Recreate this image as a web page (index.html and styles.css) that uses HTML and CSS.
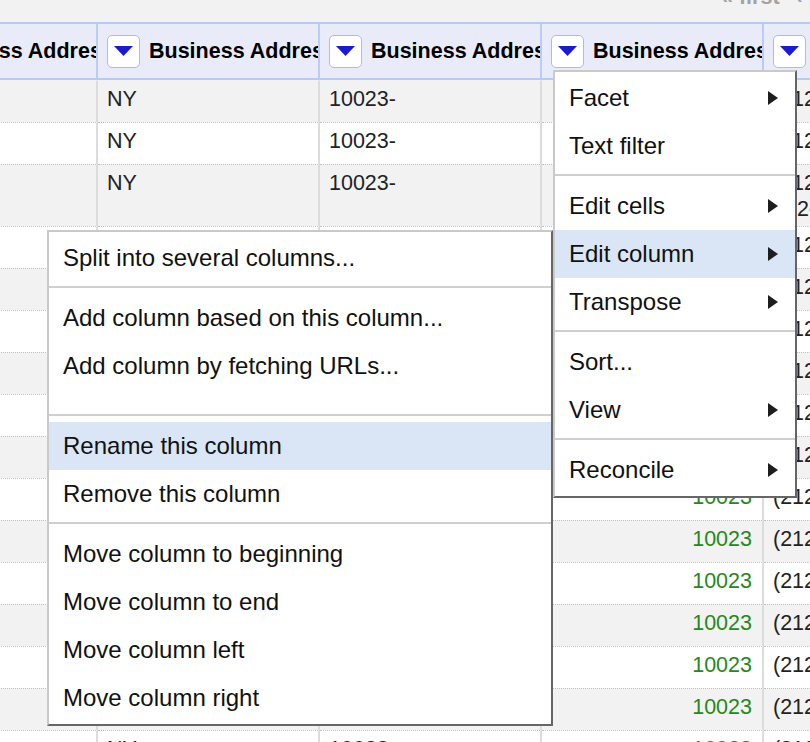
FILE: index.html
```html
<!DOCTYPE html>
<html>
<head>
<meta charset="utf-8">
<title>Data table</title>
<link rel="stylesheet" href="styles.css">
</head>
<body>
<div class="topbar"><span class="pager">« first<span class="prev">‹ previous</span></span></div>
<div class="table">
  <div class="head">
    <div class="hcell"><span class="dd"><svg width="19" height="10" viewBox="0 0 19 10"><path d="M0 0H19L9.5 10Z" fill="#1b1bc9"/></svg></span><span>Business Address : Street</span></div>
    <div class="hcell"><span class="dd"><svg width="19" height="10" viewBox="0 0 19 10"><path d="M0 0H19L9.5 10Z" fill="#1b1bc9"/></svg></span><span>Business Address : State</span></div>
    <div class="hcell"><span class="dd"><svg width="19" height="10" viewBox="0 0 19 10"><path d="M0 0H19L9.5 10Z" fill="#1b1bc9"/></svg></span><span>Business Address : Zip</span></div>
    <div class="hcell"><span class="dd"><svg width="19" height="10" viewBox="0 0 19 10"><path d="M0 0H19L9.5 10Z" fill="#1b1bc9"/></svg></span><span>Business Address : Zip 5</span></div>
    <div class="hcell"><span class="dd"><svg width="19" height="10" viewBox="0 0 19 10"><path d="M0 0H19L9.5 10Z" fill="#1b1bc9"/></svg></span><span>Business Phone</span></div>
  </div>
  <div class="row odd first"><div class="cell"></div><div class="cell">NY</div><div class="cell">10023-</div><div class="cell num">10023</div><div class="cell">(212) 496-0232</div></div>
  <div class="row even"><div class="cell"></div><div class="cell">NY</div><div class="cell">10023-</div><div class="cell num">10023</div><div class="cell">(212) 873-2011</div></div>
  <div class="row odd tall"><div class="cell"></div><div class="cell">NY</div><div class="cell">10023-</div><div class="cell num">10023</div><div class="cell">(212) 724-6000,<br>212-724-6001</div></div>
  <div class="row even"><div class="cell"></div><div class="cell">NY</div><div class="cell">10023</div><div class="cell num">10023</div><div class="cell">(212) 362-1400</div></div>
  <div class="row odd"><div class="cell"></div><div class="cell">NY</div><div class="cell">10023</div><div class="cell num">10023</div><div class="cell">(212) 799-3300</div></div>
  <div class="row even"><div class="cell"></div><div class="cell">NY</div><div class="cell">10023</div><div class="cell num">10023</div><div class="cell">(212) 874-1999</div></div>
  <div class="row odd"><div class="cell"></div><div class="cell">NY</div><div class="cell">10023</div><div class="cell num">10023</div><div class="cell">(212) 501-0011</div></div>
  <div class="row even"><div class="cell"></div><div class="cell">NY</div><div class="cell">10023</div><div class="cell num">10023</div><div class="cell">(212) 580-2400</div></div>
  <div class="row odd"><div class="cell"></div><div class="cell">NY</div><div class="cell">10023</div><div class="cell num">10023</div><div class="cell">(212) 787-5656</div></div>
  <div class="row even"><div class="cell"></div><div class="cell">NY</div><div class="cell">10023</div><div class="cell num">10023</div><div class="cell">(212) 496-9001</div></div>
  <div class="row odd"><div class="cell"></div><div class="cell">NY</div><div class="cell">10023</div><div class="cell num">10023</div><div class="cell">(212) 595-4100</div></div>
  <div class="row even"><div class="cell"></div><div class="cell">NY</div><div class="cell">10023</div><div class="cell num">10023</div><div class="cell">(212) 873-5200</div></div>
  <div class="row odd"><div class="cell"></div><div class="cell">NY</div><div class="cell">10023</div><div class="cell num">10023</div><div class="cell">(212) 721-8866</div></div>
  <div class="row even"><div class="cell"></div><div class="cell">NY</div><div class="cell">10023</div><div class="cell num">10023</div><div class="cell">(212) 362-3300</div></div>
  <div class="row odd"><div class="cell"></div><div class="cell">NY</div><div class="cell">10023</div><div class="cell num">10023</div><div class="cell">(212) 799-9100</div></div>
  <div class="row even"><div class="cell"></div><div class="cell">NY</div><div class="cell">10023</div><div class="cell num">10023</div><div class="cell">(212) 877-4400</div></div>
</div>

<div class="menu sub">
  <div class="item">Split into several columns...</div>
  <div class="sep"></div>
  <div class="item">Add column based on this column...</div>
  <div class="item">Add column by fetching URLs...</div>
  <div class="spacer"></div>
  <div class="sep"></div>
  <div class="item hl">Rename this column</div>
  <div class="item">Remove this column</div>
  <div class="sep"></div>
  <div class="item">Move column to beginning</div>
  <div class="item">Move column to end</div>
  <div class="item">Move column left</div>
  <div class="item">Move column right</div>
</div>

<div class="menu main">
  <div class="item">Facet<svg class="arr" width="10" height="14" viewBox="0 0 10 14"><path d="M0 0L10 7L0 14Z" fill="#1e1e1e"/></svg></div>
  <div class="item">Text filter</div>
  <div class="sep"></div>
  <div class="item">Edit cells<svg class="arr" width="10" height="14" viewBox="0 0 10 14"><path d="M0 0L10 7L0 14Z" fill="#1e1e1e"/></svg></div>
  <div class="item hl">Edit column<svg class="arr" width="10" height="14" viewBox="0 0 10 14"><path d="M0 0L10 7L0 14Z" fill="#1e1e1e"/></svg></div>
  <div class="item">Transpose<svg class="arr" width="10" height="14" viewBox="0 0 10 14"><path d="M0 0L10 7L0 14Z" fill="#1e1e1e"/></svg></div>
  <div class="sep"></div>
  <div class="item">Sort...</div>
  <div class="item">View<svg class="arr" width="10" height="14" viewBox="0 0 10 14"><path d="M0 0L10 7L0 14Z" fill="#1e1e1e"/></svg></div>
  <div class="sep"></div>
  <div class="item">Reconcile<svg class="arr" width="10" height="14" viewBox="0 0 10 14"><path d="M0 0L10 7L0 14Z" fill="#1e1e1e"/></svg></div>
</div>
</body>
</html>
```

FILE: styles.css
```css
html, body {
  margin: 0;
  padding: 0;
}
body {
  background: #f2f2f2;
  font-family: "Liberation Sans", Arial, Helvetica, sans-serif;
  width: 810px;
  height: 742px;
  overflow: hidden;
  position: relative;
}

.topbar {
  height: 22px;
  overflow: hidden;
  padding-left: 721px;
  color: #a3a3a3;
  font-size: 21.5px;
  font-weight: bold;
  line-height: 26px;
  white-space: nowrap;
}
.pager {
  display: block;
  margin-top: -16px;
}
.prev {
  margin-left: 16px;
}

.table {
  margin-left: -124px;
  width: 1110px;
}

.head {
  display: flex;
  height: 58px;
  box-sizing: border-box;
  border-top: 2px solid #b8c8f7;
  border-bottom: 2px solid #b8c8f7;
  background: #e9ecf8;
}
.hcell {
  flex: none;
  width: 222px;
  box-sizing: border-box;
  border-right: 2px solid #bccbf6;
  display: flex;
  align-items: center;
  gap: 9px;
  padding-left: 9px;
  overflow: hidden;
  white-space: nowrap;
  font-weight: bold;
  font-size: 21.5px;
  color: #000;
}
.dd {
  flex: none;
  width: 33px;
  height: 33px;
  box-sizing: border-box;
  border: 1px solid #a9bbf3;
  border-radius: 5px;
  background: #fff;
  display: flex;
  align-items: center;
  justify-content: center;
}

.row {
  display: flex;
  height: 42px;
}
.row.tall {
  height: 62px;
}
.row.odd {
  background: #f2f2f2;
}
.row.even {
  background: #fff;
}
.cell {
  flex: none;
  width: 222px;
  box-sizing: border-box;
  border-right: 2px solid #dcdcdc;
  border-top: 1px dotted #c2c2c2;
  padding: 5px 9px 0;
  font-size: 21.5px;
  line-height: 26px;
  color: #222;
  overflow: hidden;
  white-space: nowrap;
}
.row.first .cell {
  border-top-color: transparent;
}
.cell.num {
  text-align: right;
  color: #228822;
  padding-right: 10px;
}

.menu {
  position: absolute;
  box-sizing: border-box;
  background: #fff;
  border: 2px solid;
  border-color: #c9c9c9 #666 #666 #c9c9c9;
  padding: 2px 0;
  font-size: 24px;
  color: #111;
}
.main {
  left: 553px;
  top: 70px;
  width: 244px;
  z-index: 2;
}
.sub {
  left: 47px;
  top: 230px;
  width: 506px;
  z-index: 1;
}
.item {
  height: 48px;
  line-height: 48px;
  padding: 0 17px 0 14px;
  display: flex;
  justify-content: space-between;
  align-items: center;
  white-space: nowrap;
}
.item.hl {
  background: #dae6f6;
}
.arr {
  flex: none;
}
.sep {
  border-top: 2px solid #cfcfcf;
  margin: 4px 0 6px;
}
.spacer {
  height: 20px;
}
```
